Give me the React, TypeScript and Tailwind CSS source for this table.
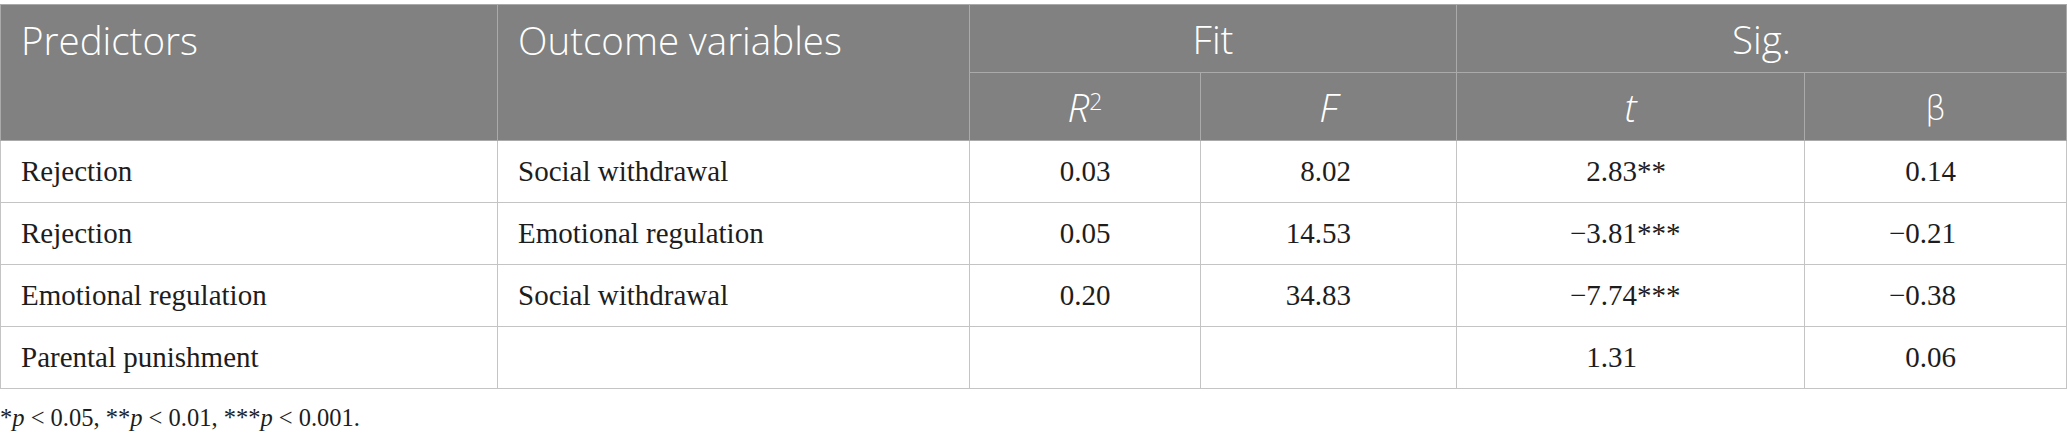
const rows = [
  { pred: "Rejection", out: "Social withdrawal", r2: "0.03", f: "8.02", t: "2.83", stars: "**", b: "0.14" },
  { pred: "Rejection", out: "Emotional regulation", r2: "0.05", f: "14.53", t: "−3.81", stars: "***", b: "−0.21" },
  { pred: "Emotional regulation", out: "Social withdrawal", r2: "0.20", f: "34.83", t: "−7.74", stars: "***", b: "−0.38" },
  { pred: "Parental punishment", out: "", r2: "", f: "", t: "1.31", stars: "", b: "0.06" },
];

const serif = "font-['Liberation_Serif',serif]";
const sans = "font-['Open_Sans',sans-serif]";

export default function App() {
  return (
    <div className="w-[2067px] h-[443px] bg-white pt-1">
      <table className="table-fixed border-collapse w-[2066px]">
        <colgroup>
          <col className="w-[497px]" />
          <col className="w-[472px]" />
          <col className="w-[231px]" />
          <col className="w-[256px]" />
          <col className="w-[348px]" />
          <col className="w-[262px]" />
        </colgroup>
        <thead className={`${sans} bg-[#808180] text-white font-light text-[38.5px] leading-[52px]`}>
          <tr className="h-[68px]">
            <th rowSpan={2} className="border border-[#a9aaa9] align-top pt-[9px] pl-5 text-left font-light">
              Predictors
            </th>
            <th rowSpan={2} className="border border-[#a9aaa9] align-top pt-[9px] pl-5 text-left font-light">
              Outcome variables
            </th>
            <th colSpan={2} className="border border-[#a9aaa9] text-center font-light">
              Fit
            </th>
            <th colSpan={2} className="border border-[#a9aaa9] text-center font-light">
              Sig.
            </th>
          </tr>
          <tr className="h-[68px]">
            <th className="border border-[#a9aaa9] text-center font-light">
              <i>R</i>
              <sup className="text-[23px] not-italic">2</sup>
            </th>
            <th className="border border-[#a9aaa9] text-center font-light">
              <i>F</i>
            </th>
            <th className="border border-[#a9aaa9] text-center font-light">
              <i>t</i>
            </th>
            <th className="border border-[#a9aaa9] text-center font-light">
              <span className="font-['DejaVu_Sans',sans-serif] font-extralight text-[34px]">β</span>
            </th>
          </tr>
        </thead>
        <tbody className={`${serif} text-[29px] text-[#1d1d1d]`}>
          {rows.map((r, i) => (
            <tr key={i} className="h-[62px]">
              <td className="border border-[#c4c4c4] pl-5">{r.pred}</td>
              <td className="border border-[#c4c4c4] pl-5">{r.out}</td>
              <td className="border border-[#c4c4c4] text-center">{r.r2}</td>
              <td className="border border-[#c4c4c4]">
                <span className="inline-block w-[150px] text-right">{r.f}</span>
              </td>
              <td className="border border-[#c4c4c4]">
                <span className="inline-block w-[180px] text-right">{r.t}</span>
                <span>{r.stars}</span>
              </td>
              <td className="border border-[#c4c4c4]">
                <span className="inline-block w-[151px] text-right">{r.b}</span>
              </td>
            </tr>
          ))}
        </tbody>
      </table>
      <p className={`${serif} mt-[13px] text-[24.5px] leading-[32px] text-[#1d1d1d]`}>
        *<i>p</i> &lt; 0.05, **<i>p</i> &lt; 0.01, ***<i>p</i> &lt; 0.001.
      </p>
    </div>
  );
}
